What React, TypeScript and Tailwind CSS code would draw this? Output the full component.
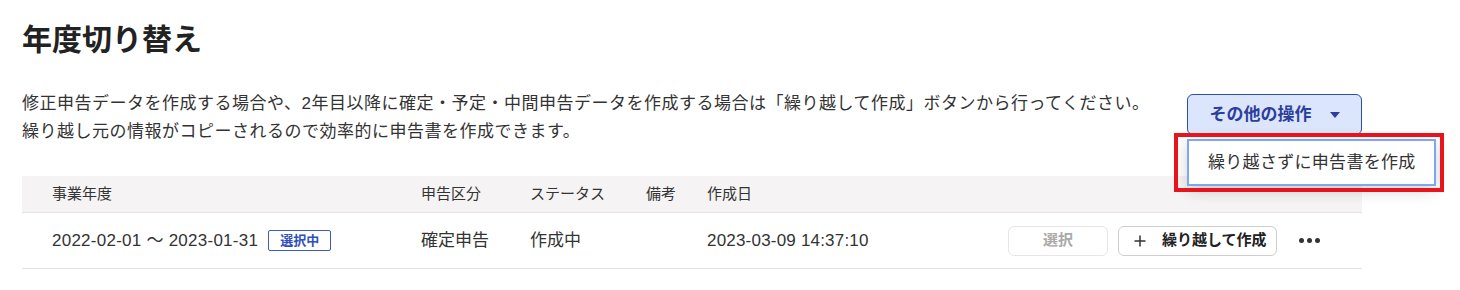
import React from "react";

const font = { fontFamily: '"Liberation Sans", "Noto Sans CJK JP", sans-serif' };

export default function App() {
  return (
    <div className="w-[1460px] h-[290px] bg-white text-[#333] overflow-hidden" style={font}>
      <div className="pl-[22px] pt-[20px] w-[1362px]">
        <h1 className="text-[30px] leading-[40px] font-bold text-[#222]">年度切り替え</h1>
        <div className="mt-[30px] flex justify-between items-start">
          <p className="text-[17px] leading-[28px] text-[#333] tracking-[0.5px]">
            修正申告データを作成する場合や、2年目以降に確定・予定・中間申告データを作成する場合は「繰り越して作成」ボタンから行ってください。
            <br />
            繰り越し元の情報がコピーされるので効率的に申告書を作成できます。
          </p>
          <div className="relative mt-[4px] shrink-0">
            <button className="w-[175px] h-[41px] rounded-[6px] border border-[#2e4cae] bg-[#dbe5fb] text-[#2c3f9c] font-bold text-[17px] flex items-center justify-center gap-[18px]">
              <span>その他の操作</span>
              <svg width="10" height="6" viewBox="0 0 10 6"><path d="M0 0 L10 0 L5 6 Z" fill="#2c3f9c" /></svg>
            </button>
            <div className="absolute left-0 top-[45px] w-[249px] h-[47px] bg-white border-2 border-[#7da7ef] shadow-[0_4px_16px_rgba(0,0,0,0.18)] flex items-center pl-[19px] text-[17px] text-[#333] z-10 whitespace-nowrap tracking-[0.3px]">
              繰り越さずに申告書を作成
            </div>
            <div className="absolute left-[-13px] top-[39px] w-[270px] h-[59px] border-4 border-[#e8141c] z-20 pointer-events-none" />
          </div>
        </div>
        <div className="mt-[30px]">
          <div className="flex items-center h-[37px] bg-[#f5f3f3] border-b border-[#e3e3e3] text-[15px] text-[#333] pl-[30px]">
            <div className="w-[369px]">事業年度</div>
            <div className="w-[109px]">申告区分</div>
            <div className="w-[116px]">ステータス</div>
            <div className="w-[61px]">備考</div>
            <div>作成日</div>
          </div>
          <div className="flex items-center h-[56px] border-b border-[#e3e3e3] text-[17px] text-[#333] pl-[30px]">
            <div className="w-[369px] flex items-center">
              <span className="tracking-[0.25px]">2022-02-01 ～ 2023-01-31</span>
              <span className="ml-[10px] h-[21px] px-[11px] border border-[#3a5cc6] rounded-[2px] text-[13px] font-bold text-[#2f4fbd] flex items-center">選択中</span>
            </div>
            <div className="w-[109px]">確定申告</div>
            <div className="w-[116px]">作成中</div>
            <div className="w-[61px]"></div>
            <div className="w-[301px] tracking-[0.2px]">2023-03-09 14:37:10</div>
            <button className="w-[100px] h-[30px] rounded-[6px] border border-[#e6e6e6] text-[15px] text-[#aaa] font-bold">選択</button>
            <button className="ml-[10px] w-[159px] h-[30px] rounded-[6px] border border-[#cfcfcf] text-[15px] text-[#222] font-bold flex items-center pl-[15px]">
              <svg width="12" height="12" viewBox="0 0 12 12"><path d="M6 0.5 V11.5 M0.5 6 H11.5" stroke="#333" strokeWidth="1.5" /></svg>
              <span className="ml-[16px]">繰り越して作成</span>
            </button>
            <div className="ml-[22px] flex gap-[3px]">
              <span className="w-[5px] h-[5px] rounded-full bg-[#333]" />
              <span className="w-[5px] h-[5px] rounded-full bg-[#333]" />
              <span className="w-[5px] h-[5px] rounded-full bg-[#333]" />
            </div>
          </div>
        </div>
      </div>
    </div>
  );
}
